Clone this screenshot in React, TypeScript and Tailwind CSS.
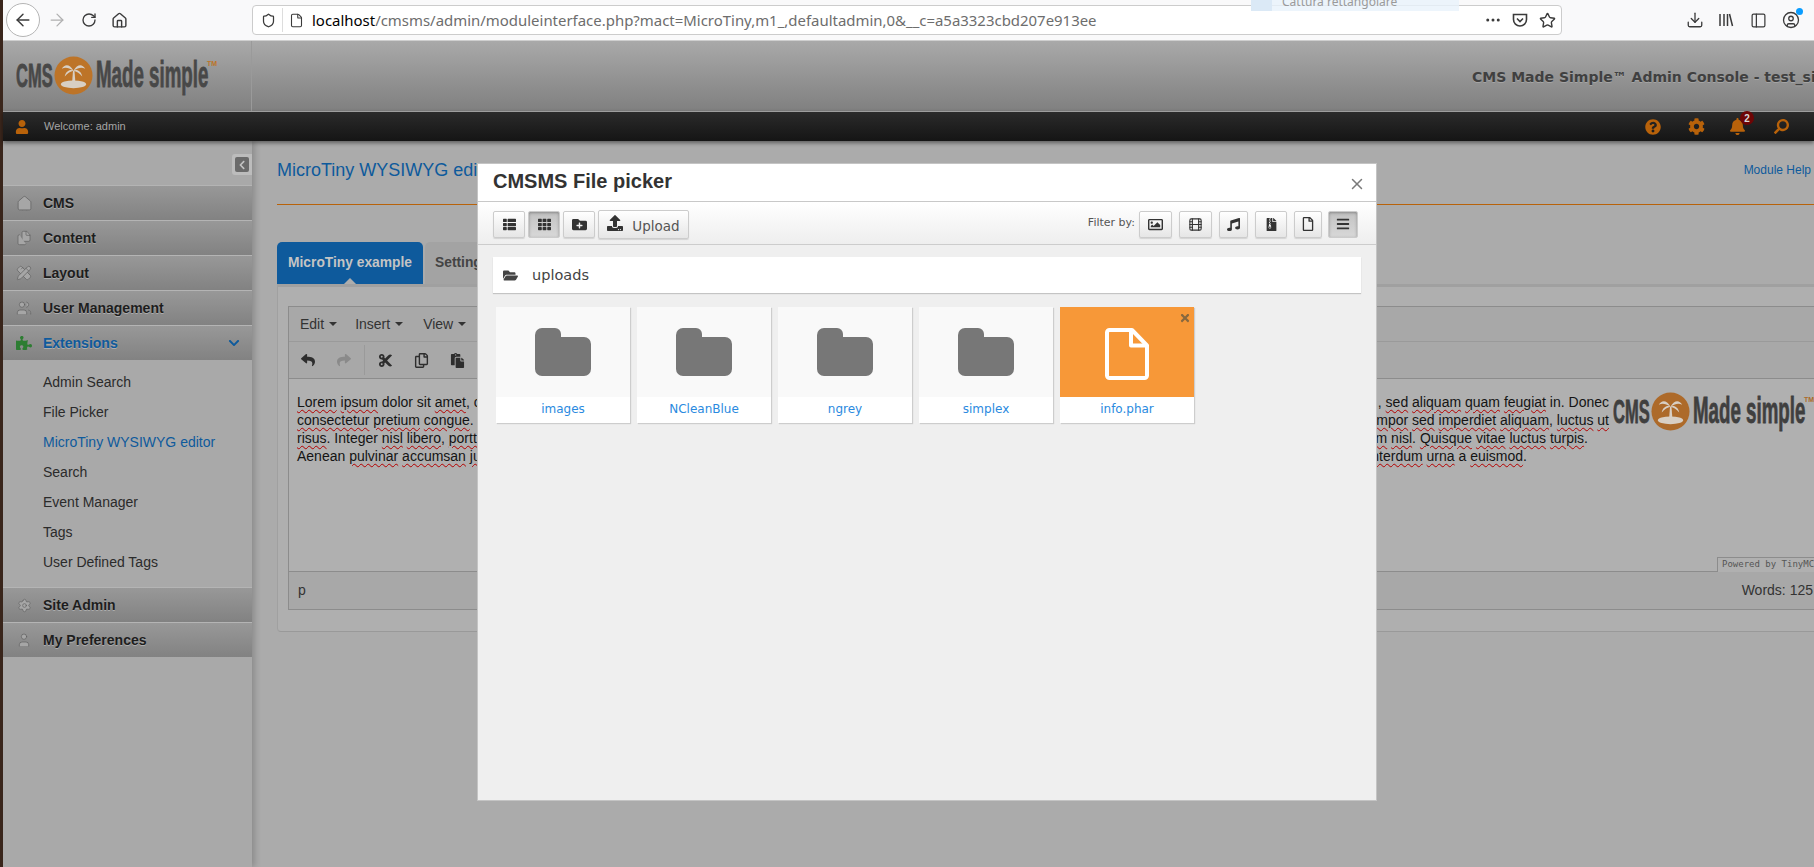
import type { ReactNode } from "react";
import {
  ArrowLeft,
  ArrowRight,
  CircleUser,
  Download,
  Ellipsis,
  File,
  Files,
  Film,
  Home,
  PanelLeft,
  PencilRuler,
  RotateCw,
  Settings,
  Shield,
  Star,
  User,
  Users,
  X,
} from "lucide-react";
import {
  FaBars,
  FaBell,
  FaChevronDown,
  FaChevronLeft,
  FaCog,
  FaCut,
  FaFileArchive,
  FaFolderOpen,
  FaFolderPlus,
  FaMusic,
  FaPaste,
  FaPuzzlePiece,
  FaQuestionCircle,
  FaRegCopy,
  FaRegFile,
  FaRegImage,
  FaReply,
  FaSearch,
  FaShare,
  FaTh,
  FaThList,
  FaTimes,
  FaUpload,
  FaUser,
} from "react-icons/fa";

const subItems = [
  "Admin Search",
  "File Picker",
  "MicroTiny WYSIWYG editor",
  "Search",
  "Event Manager",
  "Tags",
  "User Defined Tags",
];

function Logo({ dark, orange }: { dark: string; orange: string }) {
  return (
    <div className="flex h-[40px] w-[200px] items-center font-['Liberation_Sans',sans-serif] font-bold leading-none [-webkit-text-stroke:0.8px]" style={{ color: dark }}>
      <span className="w-[38px] origin-left scale-x-[.5] whitespace-nowrap text-[33px]">CMS</span>
      <svg viewBox="0 0 40 40" className="h-[39px] w-[39px] shrink-0">
        <circle cx="20" cy="20" r="19.5" fill={orange} />
        <ellipse cx="20" cy="29" rx="13" ry="4" fill="#d8cfc4" />
        <path d="M18.5 28 L19.5 15 H21 L22 28 Z" fill="#d8cfc4" />
        <path d="M20 15 C16 8 11 8 8 13 C12 11 15 12 20 15 C17 13 12 15 11 21 C14 17 17 16 20 15 C23 16 26 17 29 21 C28 15 23 13 20 15 C25 12 28 11 32 13 C29 8 24 8 20 15 Z" fill="#d8cfc4" />
      </svg>
      <span className="ml-[3px] w-[111px] origin-left scale-x-[.52] whitespace-nowrap text-[36px]">Made simple</span>
      <span className="-mt-[24px] text-[7px] [-webkit-text-stroke:0]" style={{ color: orange }}>TM</span>
    </div>
  );
}

function BrowserBar() {
  return (
    <div className="relative flex h-[41px] items-center border-b border-[#cfcfcf] bg-[#f9f9fa] text-[#3b3b3b]">
      <div className="ml-[3px] flex h-[34px] w-[34px] items-center justify-center rounded-full border border-[#b5b5b5] bg-white">
        <ArrowLeft size={20} strokeWidth={1.75} />
      </div>
      <ArrowRight size={20} strokeWidth={1.5} className="ml-[7px] text-[#b0b0b0]" />
      <RotateCw size={16} strokeWidth={2} className="ml-[14px]" />
      <Home size={17} strokeWidth={2} className="ml-[14px]" />
      <div className="ml-[124px] flex h-[30px] w-[1310px] items-center rounded-[4px] border border-[#cccccc] bg-white">
        <Shield size={15} strokeWidth={2} className="ml-[8px]" />
        <div className="ml-[6px] h-[24px] w-px bg-[#dddddd]" />
        <File size={15} strokeWidth={1.75} className="ml-[6px]" />
        <div className="ml-[8px] whitespace-nowrap font-['Noto_Sans',sans-serif] text-[14.95px] text-[#6d6d6d]">
          <span className="text-black">localhost</span>/cmsms/admin/moduleinterface.php?mact=MicroTiny,m1_,defaultadmin,0&amp;__c=a5a3323cbd207e913ee
        </div>
        <Ellipsis size={18} className="ml-auto" />
        <svg viewBox="0 0 16 16" className="ml-[10px] h-[16px] w-[16px]" fill="none" stroke="currentColor" strokeWidth="1.6">
          <path d="M1.5 2.5h13v5a6.5 6.5 0 0 1-13 0z" />
          <path d="M5 6.5l3 3 3-3" />
        </svg>
        <Star size={17} strokeWidth={2} className="ml-[11px] mr-[5px]" />
      </div>
      <div className="absolute left-[1248px] top-0 flex h-[11px] w-[208px] items-start overflow-hidden bg-[#e8f2fb]/80">
        <div className="h-[11px] w-[21px] bg-[#dbe9f6]" />
        <span className="-mt-[7px] ml-[10px] font-['Noto_Sans',sans-serif] text-[12px] text-[#9a9a9a]">Cattura rettangolare</span>
      </div>
      <Download size={18} strokeWidth={1.75} className="ml-[124px]" />
      <svg viewBox="0 0 16 16" className="ml-[14px] h-[16px] w-[16px]" fill="none" stroke="currentColor" strokeWidth="1.5">
        <path d="M2 2v12M6 2v12M9.5 2v12M11.5 2l3 12" />
      </svg>
      <PanelLeft size={17} strokeWidth={1.75} className="ml-[16px]" />
      <div className="relative ml-[15px]">
        <CircleUser size={18} strokeWidth={1.75} />
        <div className="absolute -right-[3px] -top-[3px] h-[7px] w-[7px] rounded-full bg-[#0a9dff]" />
      </div>
    </div>
  );
}

function SiteHeader() {
  return (
    <>
      <div className="flex h-[70px] bg-gradient-to-b from-[#a9a9a9] to-[#808080]">
        <div className="flex w-[249px] items-center border-r border-[#9a9a9a] pb-[2px] pl-[13px]">
          <Logo dark="#484848" orange="#bd7428" />
        </div>
        <div className="flex-1 overflow-hidden whitespace-nowrap pl-[1220px] pt-[26px] font-['DejaVu_Sans',sans-serif] text-[14px] font-bold text-[#404040] [text-shadow:0_1px_0_#a5a5a5]">
          CMS Made Simple™ Admin Console - test_site
        </div>
      </div>
      <div className="relative z-10 flex h-[30px] items-center border-t border-[#9e9e9e] bg-gradient-to-b from-[#2b2b2b] to-[#151515] shadow-[0_2px_4px_rgba(0,0,0,0.45)]">
        <FaUser size={14} className="ml-[12px] text-[#b8620a]" />
        <span className="ml-[15px] whitespace-nowrap font-['Liberation_Sans',sans-serif] text-[11px] text-[#a5a5a5]">Welcome: admin</span>
        <FaQuestionCircle size={16} className="ml-auto text-[#b8620a]" />
        <FaCog size={17} className="ml-[27px] text-[#b8620a]" />
        <div className="relative ml-[24px]">
          <FaBell size={17} className="text-[#b8620a]" />
          <span className="absolute -right-[8px] -top-[7px] flex h-[14px] w-[14px] items-center justify-center rounded-full bg-[#6d0505] font-['Liberation_Sans',sans-serif] text-[10px] font-bold text-[#d8d8d8]">2</span>
        </div>
        <FaSearch size={15} className="ml-[28px] mr-[25px] -scale-x-100 text-[#b8620a]" />
      </div>
    </>
  );
}

function MenuRow({ icon, label, active }: { icon: ReactNode; label: string; active?: boolean }) {
  return (
    <div className="flex h-[35px] items-center border-t border-[#b4b4b4] bg-gradient-to-b from-[#989898] to-[#828282] font-bold first:border-[#868686]">
      <span className="flex w-[40px] justify-center pl-[2px]">{icon}</span>
      <span className={`text-[14px] [text-shadow:0_1px_0_#adadad] ${active ? "text-[#0e5a9c]" : "text-[#1d1d1d]"}`}>{label}</span>
      {active && <FaChevronDown size={12} className="ml-auto mr-[12px] text-[#0e5a9c]" />}
    </div>
  );
}

function Sidebar() {
  const iconClass = "fill-[#a6a6a6] text-[#5e5e5e]";
  return (
    <aside className="relative w-[249px] shrink-0 bg-[#a9a9a9] font-['Liberation_Sans',sans-serif] shadow-[3px_0_6px_rgba(0,0,0,0.18)]">
      <div className="flex h-[44px] justify-end pt-[13px]">
        <div className="flex h-[21px] w-[20px] items-center justify-center rounded-l-[3px] bg-[#bcbcbc]">
          <div className="flex h-[15px] w-[14px] items-center justify-center rounded-[2px] bg-[#6a6a6a]">
            <FaChevronLeft size={10} className="text-[#c4c4c4]" />
          </div>
        </div>
      </div>
      <MenuRow icon={<Home size={17} strokeWidth={1} className={iconClass} />} label="CMS" />
      <MenuRow icon={<Files size={16} strokeWidth={1} className={iconClass} />} label="Content" />
      <MenuRow icon={<PencilRuler size={16} strokeWidth={1} className={iconClass} />} label="Layout" />
      <MenuRow icon={<Users size={16} strokeWidth={1} className={iconClass} />} label="User Management" />
      <MenuRow icon={<FaPuzzlePiece size={16} className="text-[#2d7d32]" />} label="Extensions" active />
      <ul className="flex flex-col pb-[10px] pt-[7px] text-[14px] text-[#2b2b2b]">
        {subItems.map((item) => (
          <li key={item} className={`flex h-[30px] items-center pl-[40px] ${item.startsWith("MicroTiny") ? "text-[#0e5a9c]" : ""}`}>
            {item}
          </li>
        ))}
      </ul>
      <MenuRow icon={<Settings size={15} strokeWidth={1} className={iconClass} />} label="Site Admin" />
      <MenuRow icon={<User size={16} strokeWidth={1} className={iconClass} />} label="My Preferences" />
    </aside>
  );
}

function Sp({ children }: { children: ReactNode }) {
  return <span className="underline decoration-[#b40000] decoration-wavy decoration-1 underline-offset-2">{children}</span>;
}

function EditorText() {
  return (
    <div className="flex h-[192px] bg-[#b0b0b0] pl-[8px] pt-[14px] text-[14px] leading-[18px] text-[#141414]">
      <div className="w-[1312px] shrink-0">
        <div className="flex whitespace-nowrap">
          <span><Sp>Lorem</Sp> <Sp>ipsum</Sp> dolor sit <Sp>amet</Sp>, consectetur</span>
          <span className="ml-auto">, <Sp>sed</Sp> <Sp>aliquam</Sp> <Sp>quam</Sp> <Sp>feugiat</Sp> in. Donec</span>
        </div>
        <div className="flex whitespace-nowrap">
          <span><Sp>consectetur</Sp> <Sp>pretium</Sp> <Sp>congue</Sp>. Sed vitae</span>
          <span className="ml-auto"><Sp>tempor</Sp> <Sp>sed</Sp> <Sp>imperdiet</Sp> <Sp>aliquam</Sp>, <Sp>luctus</Sp> <Sp>ut</Sp></span>
        </div>
        <div className="flex whitespace-nowrap">
          <span><Sp>risus</Sp>. Integer <Sp>nisl</Sp> <Sp>libero</Sp>, <Sp>porttitor</Sp></span>
          <span className="ml-auto mr-[21px]"><Sp>ipsum</Sp> <Sp>nisl</Sp>. <Sp>Quisque</Sp> <Sp>vitae</Sp> <Sp>luctus</Sp> <Sp>turpis</Sp>.</span>
        </div>
        <div className="flex whitespace-nowrap">
          <span>Aenean <Sp>pulvinar</Sp> <Sp>accumsan</Sp> <Sp>justo</Sp></span>
          <span className="ml-auto mr-[82px]"><Sp>interdum</Sp> <Sp>urna</Sp> a <Sp>euismod</Sp>.</span>
        </div>
      </div>
      <div className="ml-[4px] -mt-[2px]">
        <Logo dark="#3f3f3f" orange="#ad6a2a" />
      </div>
    </div>
  );
}

function Editor() {
  return (
    <div className="relative border-y border-l border-[#8c8c8c] font-['Liberation_Sans',sans-serif]">
      <div className="flex h-[35px] items-center border-b border-[#9a9a9a] bg-[#a8a8a8] text-[14px] text-[#333333]">
        <span className="ml-[11px]">Edit</span>
        <span className="ml-[5px] border-x-[4px] border-t-[4px] border-x-transparent border-t-[#333333]" />
        <span className="ml-[18px]">Insert</span>
        <span className="ml-[5px] border-x-[4px] border-t-[4px] border-x-transparent border-t-[#333333]" />
        <span className="ml-[20px]">View</span>
        <span className="ml-[5px] border-x-[4px] border-t-[4px] border-x-transparent border-t-[#333333]" />
      </div>
      <div className="flex h-[37px] items-center border-b border-[#8c8c8c] bg-[#a8a8a8] text-[#2e2e2e]">
        <FaReply size={14} className="ml-[12px]" />
        <FaShare size={14} className="ml-[22px] text-[#8a8a8a]" />
        <div className="ml-[13px] h-[30px] w-px bg-[#9a9a9a]" />
        <FaCut size={15} className="ml-[13px]" />
        <FaRegCopy size={15} className="ml-[21px]" />
        <FaPaste size={15} className="ml-[21px]" />
      </div>
      <EditorText />
      <div className="flex h-[38px] items-center justify-between border-t border-[#8c8c8c] bg-[#a8a8a8] pl-[9px] pr-[1px] text-[14px] text-[#333333]">
        <span>p</span>
        <span>Words: 125</span>
      </div>
      <div className="absolute right-0 top-[250px] flex h-[15px] w-[97px] items-center overflow-hidden whitespace-nowrap border-l border-t border-[#8c8c8c] bg-[#b0b0b0] pl-[4px] font-['DejaVu_Sans_Mono',monospace] text-[9px] text-[#555555]">
        Powered by TinyMCE
      </div>
    </div>
  );
}

function MainPanel() {
  return (
    <main className="min-w-0 flex-1 bg-[#ababab] pl-[25px] font-['Liberation_Sans',sans-serif]">
      <div className="flex h-[64px] justify-between border-b-[1px] border-[#b8620a] pr-[3px] pt-[18px]">
        <h1 className="text-[18px] leading-[22px] text-[#0e5a9c]">MicroTiny WYSIWYG editor</h1>
        <span className="pt-[4px] text-[12px] leading-[14px] text-[#0e5a9c]">Module Help</span>
      </div>
      <div className="mt-[37px] flex gap-[2px] text-[13.8px] font-bold">
        <div className="relative flex h-[42px] w-[146px] items-center justify-center rounded-t-[5px] bg-[#0e5a9c] text-[#c4c4c4]">
          MicroTiny example
          <span className="absolute bottom-0 left-[67px] border-x-[6px] border-b-[6px] border-x-transparent border-b-[#adadad]" />
        </div>
        <div className="flex h-[42px] w-[120px] items-center rounded-t-[5px] bg-[#a3a3a3] pl-[10px] text-[#444444]">Settings</div>
      </div>
      <div className="rounded-bl-[4px] border-b border-l border-t-[3px] border-[#a0a0a0] border-b-[#999999] bg-[#afafaf] pb-[21px] pl-[10px] pt-[19px]">
        <Editor />
      </div>
    </main>
  );
}

function ToolButton({ children, active, className }: { children: ReactNode; active?: boolean; className: string }) {
  return (
    <div
      className={`mt-[2px] flex h-[27px] items-center justify-center rounded-[2px] border border-[#cccccc] text-[#333333] shadow-[0_1px_1px_rgba(0,0,0,0.12)] ${
        active ? "bg-gradient-to-b from-[#c2c2c2] to-[#d8d8d8] shadow-[inset_0_1px_3px_rgba(0,0,0,0.3)]" : "bg-gradient-to-b from-white to-[#e6e6e6]"
      } ${className}`}
    >
      {children}
    </div>
  );
}

function Card({ name, file }: { name: string; file?: boolean }) {
  return (
    <div className="h-[116px] w-[134px] bg-white shadow-[1px_1px_1px_rgba(0,0,0,0.14)]">
      <div className={`relative flex h-[90px] items-center justify-center ${file ? "bg-[#f79838]" : "bg-[#f9f9f9]"}`}>
        {file ? (
          <>
            <svg viewBox="0 0 44 52" className="mt-[3px] h-[52px] w-[44px]" fill="none" stroke="#ffffff" strokeWidth="4" strokeLinejoin="round">
              <path d="M2 4.5a2.5 2.5 0 0 1 2.5-2.5H27L42 17.5v30a2.5 2.5 0 0 1-2.5 2.5h-35A2.5 2.5 0 0 1 2 47.5z" />
              <path d="M26 2v15.5h16" />
            </svg>
            <FaTimes size={12} className="absolute right-[3px] top-[5px] text-[#87683f]" />
          </>
        ) : (
          <svg viewBox="0 0 56 48" className="h-[48px] w-[56px]" fill="#777777">
            <path d="M0 7a7 7 0 0 1 7-7h13a6 6 0 0 1 6 6v3h23a7 7 0 0 1 7 7v25a7 7 0 0 1-7 7H7a7 7 0 0 1-7-7z" />
          </svg>
        )}
      </div>
      <div className="flex h-[24px] items-center justify-center text-[12px] text-[#2a8ae0]">{name}</div>
    </div>
  );
}

function FilePicker() {
  return (
    <div className="absolute left-[477px] top-[163px] flex h-[638px] w-[900px] flex-col border border-[#c4c4c4] bg-[#efefef] font-['DejaVu_Sans',sans-serif]">
      <div className="flex h-[38px] shrink-0 items-start justify-between border-b border-[#c8c8c8] bg-white pl-[15px] pr-[10px]">
        <h2 className="pt-[3px] font-['Liberation_Sans',sans-serif] text-[20px] font-bold leading-[28px] text-[#333333]">CMSMS File picker</h2>
        <X size={18} strokeWidth={2} className="mt-[11px] text-[#7a7a7a]" />
      </div>
      <div className="flex h-[43px] shrink-0 items-center border-b border-[#cccccc] bg-gradient-to-b from-white to-[#eeeeee] pl-[15px] pr-[18px]">
        <ToolButton className="w-[32px]"><FaThList size={13} /></ToolButton>
        <ToolButton active className="ml-[3px] w-[32px]"><FaTh size={13} /></ToolButton>
        <ToolButton className="ml-[3px] w-[32px]"><FaFolderPlus size={15} /></ToolButton>
        <ToolButton className="ml-[3px] !h-[29px] w-[91px] gap-[9px] text-[13.5px] text-[#555555]">
          <FaUpload size={16} className="-mt-[3px] text-[#333333]" />
          <span className="mt-[5px]">Upload</span>
        </ToolButton>
        <span className="ml-auto mr-[4px] text-[11px] text-[#555555]">Filter by:</span>
        <ToolButton className="w-[33px]"><FaRegImage size={15} /></ToolButton>
        <ToolButton className="ml-[7px] w-[33px]"><Film size={15} strokeWidth={1.75} /></ToolButton>
        <ToolButton className="ml-[7px] w-[29px]"><FaMusic size={13} /></ToolButton>
        <ToolButton className="ml-[7px] w-[32px]"><FaFileArchive size={13} /></ToolButton>
        <ToolButton className="ml-[7px] w-[28px]"><FaRegFile size={14} /></ToolButton>
        <ToolButton active className="ml-[6px] w-[30px]"><FaBars size={14} /></ToolButton>
      </div>
      <div className="flex-1 px-[15px] pt-[12px]">
        <div className="flex h-[36px] w-[868px] items-center bg-white pl-[10px] text-[14.5px] text-[#444444] shadow-[0_1px_1px_rgba(0,0,0,0.18)]">
          <FaFolderOpen size={15} className="text-[#444444]" />
          <span className="ml-[14px] pt-[1px]">uploads</span>
        </div>
        <div className="mt-[14px] flex gap-[7px] pl-[3px]">
          <Card name="images" />
          <Card name="NCleanBlue" />
          <Card name="ngrey" />
          <Card name="simplex" />
          <Card name="info.phar" file />
        </div>
      </div>
    </div>
  );
}

export default function App() {
  return (
    <div className="relative flex h-[867px] w-[1814px] overflow-hidden bg-[#ababab]">
      <div className="w-[3px] shrink-0 bg-[#3a261c]" />
      <div className="flex min-w-0 flex-1 flex-col">
        <BrowserBar />
        <SiteHeader />
        <div className="flex flex-1">
          <Sidebar />
          <MainPanel />
        </div>
      </div>
      <FilePicker />
    </div>
  );
}
